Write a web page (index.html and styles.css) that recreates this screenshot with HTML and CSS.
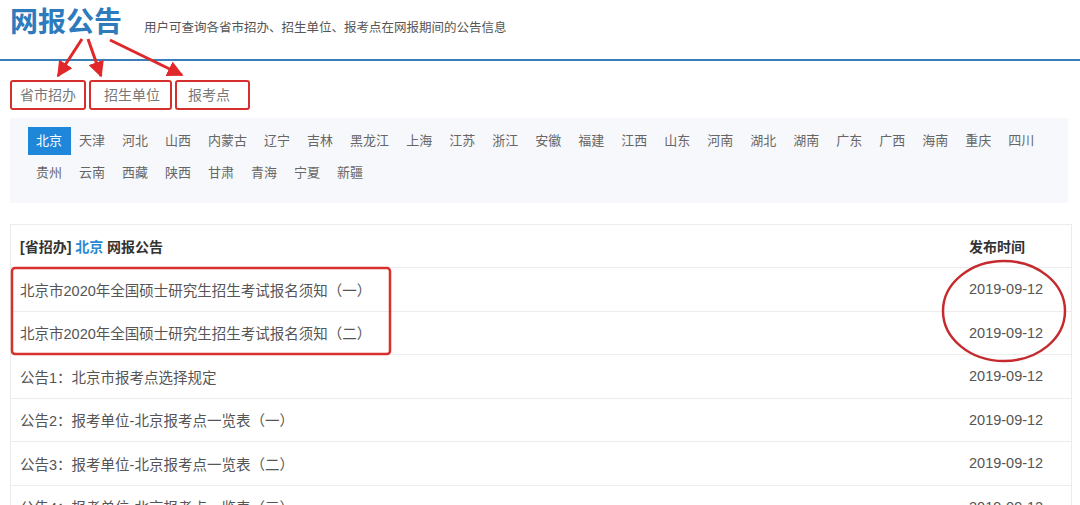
FILE: index.html
```html
<!DOCTYPE html>
<html lang="zh-CN">
<head>
    <meta charset="UTF-8">
    <meta name="viewport" content="width=device-width, initial-scale=1.0">
    <title>网报公告</title>
    <link rel="stylesheet" href="styles.css">
</head>
<body>
    <header class="header">
        <h1 class="title">网报公告</h1>
        <p class="subtitle">用户可查询各省市招办、招生单位、报考点在网报期间的公告信息</p>
    </header>

    <nav class="tabs">
        <span class="tab tab-first">省市招办</span>
        <span class="tab tab-second">招生单位</span>
        <span class="tab tab-third">报考点</span>
    </nav>

    <div class="provinces">
        <span class="prov active">北京</span>
        <span class="prov">天津</span>
        <span class="prov">河北</span>
        <span class="prov">山西</span>
        <span class="prov">内蒙古</span>
        <span class="prov">辽宁</span>
        <span class="prov">吉林</span>
        <span class="prov">黑龙江</span>
        <span class="prov">上海</span>
        <span class="prov">江苏</span>
        <span class="prov">浙江</span>
        <span class="prov">安徽</span>
        <span class="prov">福建</span>
        <span class="prov">江西</span>
        <span class="prov">山东</span>
        <span class="prov">河南</span>
        <span class="prov">湖北</span>
        <span class="prov">湖南</span>
        <span class="prov">广东</span>
        <span class="prov">广西</span>
        <span class="prov">海南</span>
        <span class="prov">重庆</span>
        <span class="prov">四川</span>
        <span class="prov">贵州</span>
        <span class="prov">云南</span>
        <span class="prov">西藏</span>
        <span class="prov">陕西</span>
        <span class="prov">甘肃</span>
        <span class="prov">青海</span>
        <span class="prov">宁夏</span>
        <span class="prov">新疆</span>
    </div>

    <div class="notice-table">
        <div class="row head">
            <div class="name">[省招办] <span class="city">北京</span> 网报公告</div>
            <div class="date">发布时间</div>
        </div>
        <div class="row">
            <div class="name">北京市2020年全国硕士研究生招生考试报名须知（一）</div>
            <div class="date">2019-09-12</div>
        </div>
        <div class="row">
            <div class="name">北京市2020年全国硕士研究生招生考试报名须知（二）</div>
            <div class="date">2019-09-12</div>
        </div>
        <div class="row">
            <div class="name">公告1：北京市报考点选择规定</div>
            <div class="date">2019-09-12</div>
        </div>
        <div class="row">
            <div class="name">公告2：报考单位-北京报考点一览表（一）</div>
            <div class="date">2019-09-12</div>
        </div>
        <div class="row">
            <div class="name">公告3：报考单位-北京报考点一览表（二）</div>
            <div class="date">2019-09-12</div>
        </div>
        <div class="row">
            <div class="name">公告4：报考单位-北京报考点一览表（三）</div>
            <div class="date">2019-09-12</div>
        </div>
    </div>

    <!-- red marks drawn over the screenshot -->
    <svg class="marks" width="1080" height="505" viewBox="0 0 1080 505">
        <defs>
            <marker id="head" viewBox="0 0 10 10" refX="9" refY="5" markerUnits="userSpaceOnUse" markerWidth="16" markerHeight="16" orient="auto">
                <path d="M0,0 L10,5 L0,10 z" fill="#e0282a"/>
            </marker>
        </defs>
        <line x1="82" y1="39" x2="58" y2="76" stroke="#e0282a" stroke-width="3" marker-end="url(#head)"/>
        <line x1="88" y1="39" x2="101" y2="76" stroke="#e0282a" stroke-width="3" marker-end="url(#head)"/>
        <line x1="110" y1="40" x2="182" y2="75" stroke="#e0282a" stroke-width="3" marker-end="url(#head)"/>
        <rect x="12" y="268" width="378" height="86" rx="3" fill="none" stroke="#d8302e" stroke-width="2.5"/>
        <ellipse cx="1004" cy="311" rx="61" ry="50" fill="none" stroke="#c52a2e" stroke-width="2.5"/>
    </svg>
</body>
</html>
```

FILE: styles.css
```css
*{
    margin: 0;
    padding: 0;
    box-sizing: border-box;
}
body{
    background-color: #fff;
    font-family: "Liberation Sans", "Noto Sans CJK SC", sans-serif;
    color: #555;
    position: relative;
    overflow: hidden;
    height: 505px;
}
.header{
    display: flex;
    align-items: baseline;
    gap: 22px;
    height: 61px;
    padding: 6px 10px 0;
    border-bottom: 2px solid #3a7fb7;
}
.title{
    font-size: 28px;
    font-weight: bold;
    color: #2d7bbd;
    line-height: 34px;
}
.subtitle{
    font-size: 12.5px;
    color: #555;
}
.tabs{
    display: flex;
    gap: 3px;
    margin: 19px 0 0 10px;
}
.tab{
    height: 30px;
    line-height: 26px;
    font-size: 14px;
    color: #777;
    border: 2px solid #d6302e;
    border-radius: 3px;
}
.tab-first{
    padding: 0 8px;
}
.tab-second{
    padding: 0 10px 0 13px;
}
.tab-third{
    padding: 0 18px 0 11px;
}
.provinces{
    display: flex;
    flex-wrap: wrap;
    margin: 8px 12px 0 10px;
    padding: 9px 0 12px 17.5px;
    background-color: #f7f8fb;
}
.prov{
    height: 28px;
    line-height: 28px;
    padding: 0 8.5px;
    margin-bottom: 4px;
    font-size: 13px;
    color: #666;
}
.prov.active{
    background-color: #1f87d9;
    color: #fff;
}
.notice-table{
    margin: 21px 8px 0 10px;
    border: 1px solid #ececec;
    border-bottom: none;
}
.row{
    display: flex;
    align-items: center;
    height: 43.5px;
    border-bottom: 1px solid #ececec;
    font-size: 14.5px;
    color: #555;
}
.row.head{
    height: 43px;
    font-weight: bold;
    font-size: 14px;
    color: #333;
}
.name{
    flex: 1;
    padding-left: 9px;
}
.city{
    color: #2a88d6;
}
.date{
    width: 102px;
}
.marks{
    position: absolute;
    left: 0;
    top: 0;
    pointer-events: none;
}
```
